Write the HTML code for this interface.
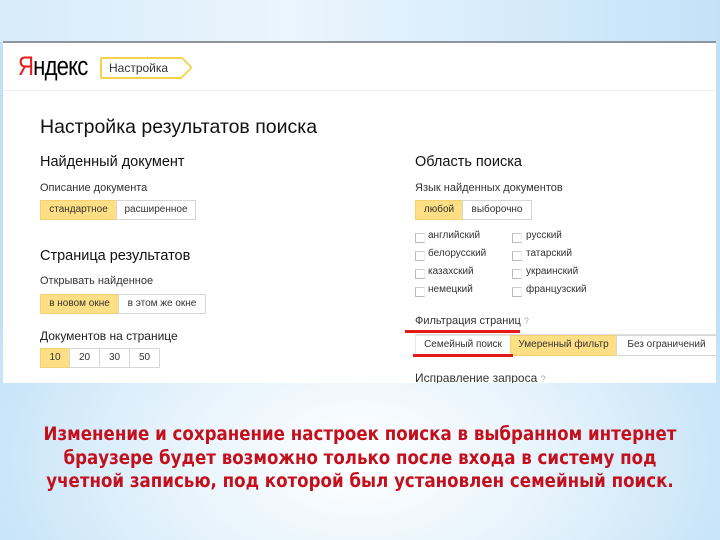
<!DOCTYPE html>
<html><head><meta charset="utf-8"><style>
*{margin:0;padding:0;box-sizing:border-box}
body{width:720px;height:540px;overflow:hidden;position:relative;font-family:"Liberation Sans","DejaVu Sans",sans-serif;
background:radial-gradient(ellipse 60% 50% at 50% 85%,#ffffff 0%,#e6f3fc 45%,#bfe0f7 100%);}
.top{position:absolute;left:0;top:0;width:720px;height:42px;background:linear-gradient(90deg,#d7ebf9,#eaf5fd 40%,#c3e2f8)}
.panel{position:absolute;left:3px;top:41px;width:713px;height:342px;background:#fff;border-top:2px solid #8e959c;overflow:hidden}
.hdr{position:absolute;left:0;top:0;width:100%;height:48px;border-bottom:1px solid #eee}
.t{position:absolute;white-space:nowrap;color:#222}
.btn{position:absolute;height:20px;border:1px solid #d6d6d6;font-size:10px;line-height:18px;text-align:center;color:#333;background:#fff}
.y{background:#ffdf86;border-color:#f5d070}
.cb{position:absolute;width:10px;height:10px;border:1px solid #bbb;border-right-color:#eee;border-top-color:#ccc}
.lab{position:absolute;font-size:10px;color:#333;white-space:nowrap}
.red{position:absolute;height:3px;background:#e41a1a}
.msg{position:absolute;left:0;top:423px;width:720px;text-align:center;color:#c4101c;font-weight:bold;font-size:18.5px;line-height:23.5px;font-family:"DejaVu Sans Condensed","DejaVu Sans","Liberation Sans",sans-serif;letter-spacing:0px}
</style></head><body>
<div class="top"></div>
<div class="panel">
 <div class="hdr"></div>
 <div class="t" style="left:15px;top:8px;font-size:27px;letter-spacing:-1px;color:#000;transform:scaleX(0.82);transform-origin:left"><span style="color:#e51b1b">Я</span>ндекс</div>
 <div style="position:absolute;left:97px;top:14px;width:82px;height:22px;border:2px solid #f5d24b;border-right:none;border-radius:2px 0 0 2px"></div>
 <div style="position:absolute;left:172px;top:17px;width:15px;height:15px;border-top:2px solid #f5d24b;border-right:2px solid #f5d24b;transform:rotate(45deg);border-radius:0 3px 0 0"></div>
 <div class="t" style="left:106px;top:18px;font-size:12px;color:#333">Настройка</div>

 <div class="t" style="left:37px;top:73px;font-size:19.5px;color:#111">Настройка результатов поиска</div>
 <div class="t" style="left:37px;top:111px;font-size:14.5px;color:#111">Найденный документ</div>
 <div class="t" style="left:37px;top:139px;font-size:11px;color:#333">Описание документа</div>
 <div class="btn y" style="left:37px;top:157px;width:77px">стандартное</div>
 <div class="btn" style="left:113px;top:157px;width:80px">расширенное</div>

 <div class="t" style="left:37px;top:205px;font-size:14.5px;color:#111">Страница результатов</div>
 <div class="t" style="left:37px;top:232px;font-size:11px;color:#333">Открывать найденное</div>
 <div class="btn y" style="left:37px;top:251px;width:79px">в новом окне</div>
 <div class="btn" style="left:115px;top:251px;width:88px">в этом же окне</div>
 <div class="t" style="left:37px;top:286px;font-size:12px;color:#222">Документов на странице</div>
 <div class="btn y" style="left:37px;top:305px;width:30px">10</div>
 <div class="btn" style="left:66px;top:305px;width:31px">20</div>
 <div class="btn" style="left:96px;top:305px;width:31px">30</div>
 <div class="btn" style="left:126px;top:305px;width:31px">50</div>

 <div class="t" style="left:412px;top:111px;font-size:14.5px;color:#111">Область поиска</div>
 <div class="t" style="left:412px;top:139px;font-size:11px;color:#333">Язык найденных документов</div>
 <div class="btn y" style="left:412px;top:157px;width:48px">любой</div>
 <div class="btn" style="left:459px;top:157px;width:70px">выборочно</div>

 <div class="cb" style="left:412px;top:190px"></div><div class="lab" style="left:425px;top:187px">английский</div>
 <div class="cb" style="left:509px;top:190px"></div><div class="lab" style="left:523px;top:187px">русский</div>
 <div class="cb" style="left:412px;top:208px"></div><div class="lab" style="left:425px;top:205px">белорусский</div>
 <div class="cb" style="left:509px;top:208px"></div><div class="lab" style="left:523px;top:205px">татарский</div>
 <div class="cb" style="left:412px;top:226px"></div><div class="lab" style="left:425px;top:223px">казахский</div>
 <div class="cb" style="left:509px;top:226px"></div><div class="lab" style="left:523px;top:223px">украинский</div>
 <div class="cb" style="left:412px;top:244px"></div><div class="lab" style="left:425px;top:241px">немецкий</div>
 <div class="cb" style="left:509px;top:244px"></div><div class="lab" style="left:523px;top:241px">французский</div>

 <div class="t" style="left:412px;top:272px;font-size:11px;color:#333">Фильтрация страниц <span style="color:#aaa;font-size:9px">?</span></div>
 <div class="red" style="left:402px;top:287px;width:115px"></div>
 <div style="position:absolute;left:412px;top:291px;width:301px;height:21px;border-top:1px solid #ddd"></div>
 <div class="btn" style="left:412px;top:292px;width:96px;height:21px;border-color:#e6e6e6">Семейный поиск</div>
 <div class="btn y" style="left:507px;top:292px;width:107px;height:21px">Умеренный фильтр</div>
 <div class="btn" style="left:613px;top:292px;width:100px;height:21px;border-right:none">Без ограничений</div>
 <div class="red" style="left:410px;top:311px;width:100px"></div>
 <div class="t" style="left:412px;top:328px;font-size:12px;color:#333">Исправление запроса <span style="color:#aaa;font-size:9px">?</span></div>
</div>
<div class="msg">Изменение и сохранение настроек поиска в выбранном интернет<br>браузере будет возможно только после входа в систему под<br>учетной записью, под которой был установлен семейный поиск.</div>
</body></html>
